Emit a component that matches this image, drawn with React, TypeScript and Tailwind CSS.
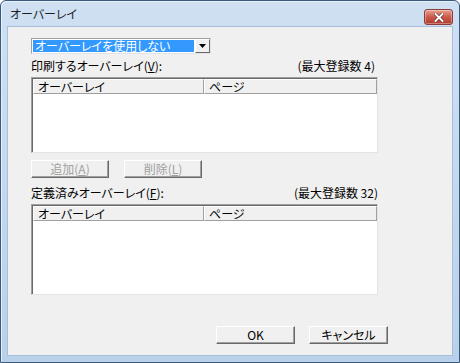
import React from 'react'

const font = "font-['Noto_Sans_CJK_JP','Noto_Sans',sans-serif] [font-feature-settings:'palt']"

function Btn({ children, disabled, w }: { children: React.ReactNode; disabled?: boolean; w: string }) {
  return (
    <div
      className={`${w} h-[18px] flex items-center justify-center text-[12px] leading-none bg-[#f0f0f0] border border-t-white border-l-white border-r-[#696969] border-b-[#696969] shadow-[inset_-1px_-1px_0_#a0a0a0] ${
        disabled ? 'text-[#a0a0a0]' : 'text-black'
      }`}
    >
      {children}
    </div>
  )
}

function OverlayList({ h }: { h: string }) {
  return (
    <div className={`w-[347px] ${h} bg-white border border-t-[#a0a0a0] border-l-[#a0a0a0] border-r-[#e3e3e3] border-b-[#e3e3e3] shadow-[inset_1px_1px_0_#696969]`}>
      <div className="flex h-[15px] ml-[1px] mt-[1px] w-[344px] text-[12px] leading-none">
        <div className="w-[171px] flex items-center pl-[4px] bg-[#f0f0f0] border border-t-white border-l-white border-r-[#a0a0a0] border-b-[#a0a0a0]">
          オーバーレイ
        </div>
        <div className="flex-1 flex items-center pl-[4px] bg-[#f0f0f0] border border-t-white border-l-white border-r-[#a0a0a0] border-b-[#a0a0a0]">
          ページ
        </div>
      </div>
    </div>
  )
}

export default function App() {
  return (
    <div className={`w-[460px] h-[363px] ${font} text-black`}>
      <div className="w-full h-full flex flex-col rounded-t-[6px] border border-[#3c5a7c] bg-gradient-to-b from-[#cfe0f3] to-[#b9d1ea] shadow-[inset_1px_1px_0_#e6f0fa]">
        {/* title bar */}
        <div className="h-[25px] flex items-start justify-between pl-[9px] pr-[6px]">
          <span className="mt-[7px] text-[12px] leading-none text-[#1e1e1e]">オーバーレイ</span>
          <div className="mt-[8px] w-[29px] h-[16px] rounded-[3px] border border-[#8b3b3b] bg-gradient-to-b from-[#e8a08f] via-[#cc5a4a] to-[#b33a2a] shadow-[inset_0_0_0_1px_rgba(255,255,255,0.35)] flex items-center justify-center">
            <svg width="10" height="9" viewBox="0 0 10 9">
              <path d="M1.5 1 L8.5 8 M8.5 1 L1.5 8" stroke="#5a2020" strokeWidth="3.2" strokeLinecap="square" />
              <path d="M1.5 1 L8.5 8 M8.5 1 L1.5 8" stroke="#ffffff" strokeWidth="2" strokeLinecap="square" />
            </svg>
          </div>
        </div>

        {/* client area */}
        <div className="mx-[6px] mb-[6px] flex-1 bg-[#f0f0f0] border border-[#a7bfdb] flex flex-col pl-[23px] text-[12px] leading-none">
          {/* combo box */}
          <div className="mt-[11px] w-[180px] h-[16px] flex bg-white border border-t-[#a0a0a0] border-l-[#a0a0a0] border-r-[#e3e3e3] border-b-[#e3e3e3]">
            <div className="flex-1 m-[1px] bg-[#3399ff] text-white flex items-center pl-[2px]">
              オーバーレイを使用しない
            </div>
            <div className="w-[15px] bg-[#f0f0f0] border border-t-white border-l-white border-r-[#696969] border-b-[#696969] flex items-center justify-center">
              <svg width="7" height="4" viewBox="0 0 7 4">
                <path d="M0 0 H7 L3.5 4 Z" fill="#000" />
              </svg>
            </div>
          </div>

          <div className="w-[347px] h-[23px] flex items-center justify-between">
            <span>
              印刷するオーバーレイ(<span className="underline">V</span>):
            </span>
            <span className="pr-[3px]">(最大登録数 4)</span>
          </div>
          <OverlayList h="h-[76px]" />

          <div className="mt-[7px] flex gap-[15px]">
            <Btn w="w-[78px]" disabled>
              追加(<span className="underline">A</span>)
            </Btn>
            <Btn w="w-[78px]" disabled>
              削除(<span className="underline">L</span>)
            </Btn>
          </div>

          <div className="mt-[4px] w-[347px] h-[22px] flex items-center justify-between">
            <span>
              定義済みオーバーレイ(<span className="underline">F</span>):
            </span>
            <span>(最大登録数 32)</span>
          </div>
          <OverlayList h="h-[91px]" />

          <div className="mt-[31px] w-[357px] flex justify-end gap-[14px]">
            <Btn w="w-[79px]">OK</Btn>
            <Btn w="w-[79px]">キャンセル</Btn>
          </div>
        </div>
      </div>
    </div>
  )
}
